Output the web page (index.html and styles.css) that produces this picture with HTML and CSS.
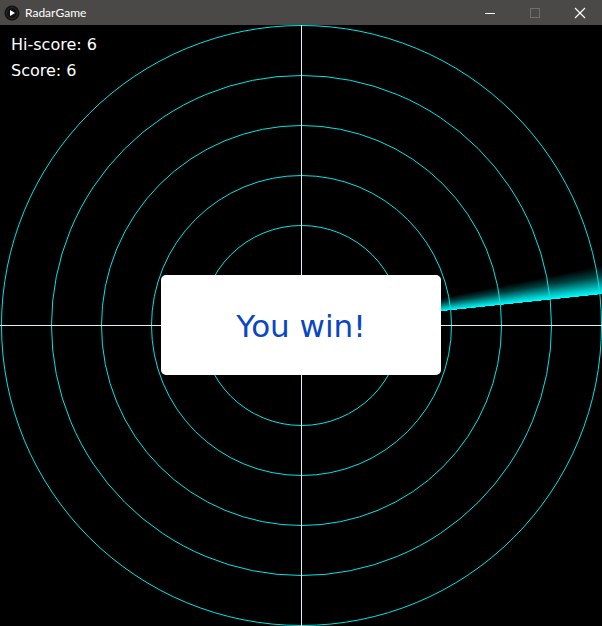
FILE: index.html
```html
<!DOCTYPE html>
<html>
<head>
<meta charset="utf-8">
<title>RadarGame</title>
<link rel="stylesheet" href="styles.css">
</head>
<body>
<div class="window">
  <div class="titlebar">
    <div class="app">
      <svg class="app-icon" width="16" height="16" viewBox="0 0 16 16">
        <circle cx="8" cy="8" r="7.5" fill="#111"/>
        <circle cx="8" cy="8" r="5.5" fill="none" stroke="#2a2a2a" stroke-width="1"/>
        <polygon points="6,5 11,8 6,11" fill="#fff"/>
      </svg>
      <span class="title">RadarGame</span>
    </div>
    <div class="controls">
      <div class="ctl">
        <svg width="12" height="12" viewBox="0 0 12 12"><line x1="1" y1="6.5" x2="11" y2="6.5" stroke="#fff" stroke-width="1"/></svg>
      </div>
      <div class="ctl">
        <svg width="12" height="12" viewBox="0 0 12 12"><rect x="1.5" y="1.5" width="9" height="9" fill="none" stroke="#6e6e6e" stroke-width="1"/></svg>
      </div>
      <div class="ctl">
        <svg width="12" height="12" viewBox="0 0 12 12"><path d="M1 1 L11 11 M11 1 L1 11" stroke="#fff" stroke-width="1.1"/></svg>
      </div>
    </div>
  </div>
  <div class="canvas">
    <div class="beam"></div>
    <svg class="radar" width="602" height="601" viewBox="0 0 602 601">
      <g fill="none" stroke="#00e6e6" stroke-width="1">
        <circle cx="301.5" cy="300.5" r="100"/>
        <circle cx="301.5" cy="300.5" r="150"/>
        <circle cx="301.5" cy="300.5" r="200"/>
        <circle cx="301.5" cy="300.5" r="250"/>
        <circle cx="301.5" cy="300.5" r="300"/>
      </g>
      <g stroke="#d8f4f4" stroke-width="1">
        <line x1="0" y1="300.5" x2="602" y2="300.5"/>
        <line x1="301.5" y1="0" x2="301.5" y2="601"/>
      </g>
    </svg>
    <div class="scores">
      <div class="score-line">Hi-score: 6</div>
      <div class="score-line">Score: 6</div>
    </div>
    <div class="message">
      <span class="message-text">You win!</span>
    </div>
  </div>
</div>
</body>
</html>
```
FILE: styles.css
```css
html, body {
  margin: 0;
  padding: 0;
  background: #000;
}
.window {
  width: 602px;
  height: 626px;
  display: flex;
  flex-direction: column;
  overflow: hidden;
}
.titlebar {
  height: 25px;
  flex: 0 0 25px;
  background: #4a4947;
  display: flex;
  justify-content: space-between;
  align-items: stretch;
}
.app {
  display: flex;
  align-items: center;
  padding-left: 4px;
  gap: 5px;
}
.app-icon {
  display: block;
}
.title {
  font-family: Lato, "Noto Sans", sans-serif;
  font-size: 12px;
  color: #fff;
  line-height: 25px;
}
.controls {
  display: flex;
}
.ctl {
  width: 45px;
  display: flex;
  align-items: center;
  justify-content: center;
}
.ctl svg {
  display: block;
  margin-left: 1px;
}
.canvas {
  position: relative;
  width: 602px;
  height: 601px;
  background: #000;
  overflow: hidden;
}
.radar {
  position: absolute;
  left: 0;
  top: 0;
  display: block;
}
.beam {
  position: absolute;
  left: -48.5px;
  top: -49.5px;
  width: 700px;
  height: 700px;
  border-radius: 50%;
  background: conic-gradient(from 0deg at 50% 50%,
    rgba(0,255,255,0) 0deg,
    rgba(0,255,255,0) 78.6deg,
    rgba(0,255,255,0.25) 80.5deg,
    rgba(0,255,255,0.7) 82.5deg,
    rgba(0,255,255,1) 83.9deg,
    rgba(0,0,0,0) 83.95deg,
    rgba(0,0,0,0) 360deg);
}
.scores {
  position: absolute;
  left: 11px;
  top: 7px;
  font-family: "DejaVu Sans", sans-serif;
  font-size: 16px;
  color: #fff;
}
.score-line {
  line-height: 26px;
}
.message {
  position: absolute;
  left: 161px;
  top: 250px;
  width: 280px;
  height: 100px;
  background: #fff;
  border-radius: 5px;
  display: flex;
  align-items: center;
  justify-content: center;
}
.message-text {
  font-family: "DejaVu Sans", sans-serif;
  font-size: 31px;
  line-height: 31px;
  color: #0846c6;
  padding-top: 3px;
}
```
